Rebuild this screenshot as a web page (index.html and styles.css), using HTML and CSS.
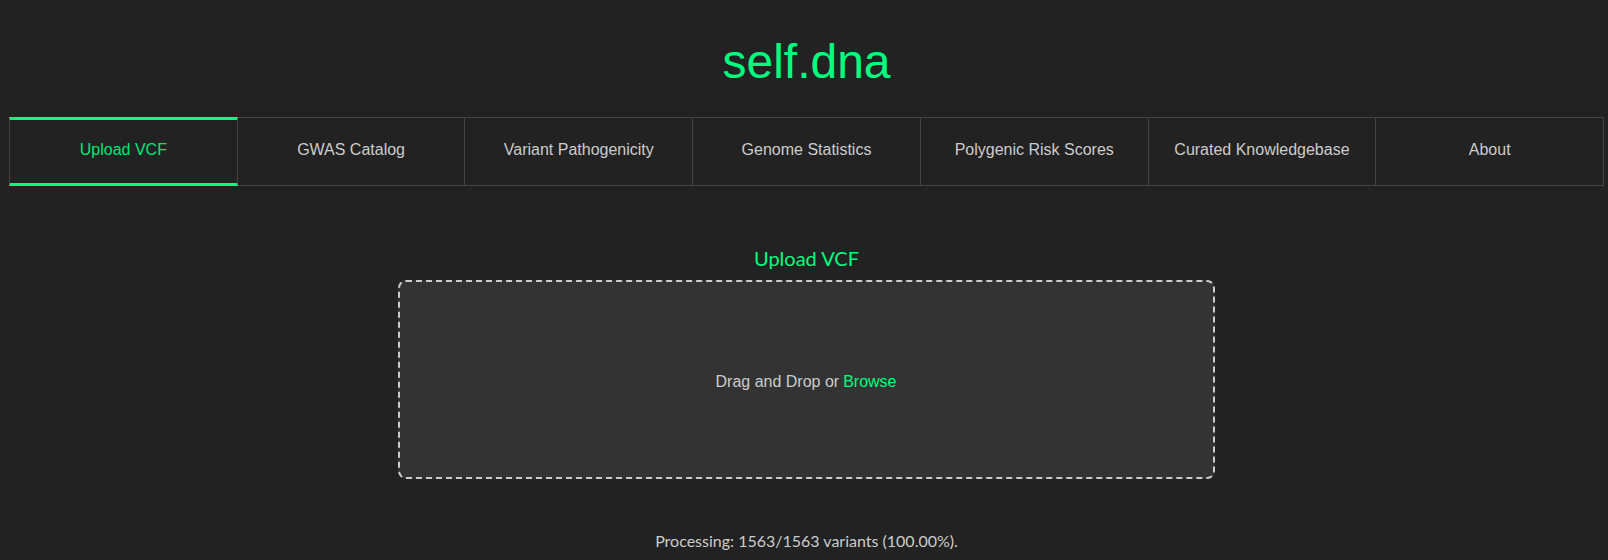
FILE: index.html
```html
<!DOCTYPE html>
<html>
<head>
<meta charset="utf-8">
<link rel="stylesheet" href="styles.css">
</head>
<body>
<div class="page">
  <h1 class="title">self.dna</h1>
  <nav class="tabs">
    <div class="tab active">Upload VCF</div>
    <div class="tab">GWAS Catalog</div>
    <div class="tab">Variant Pathogenicity</div>
    <div class="tab">Genome Statistics</div>
    <div class="tab">Polygenic Risk Scores</div>
    <div class="tab">Curated Knowledgebase</div>
    <div class="tab">About</div>
  </nav>
  <section class="upload">
    <h2 class="upload-title">Upload VCF</h2>
    <div class="dropzone">Drag and Drop or <span class="browse">Browse</span></div>
    <p class="status">Processing: 1563/1563 variants (100.00%).</p>
  </section>
</div>
</body>
</html>
```
FILE: styles.css
```css
html, body {
  margin: 0;
  padding: 0;
  background: #222222;
  color: #cccccc;
  font-family: Lato, "Liberation Sans", sans-serif;
}
.page {
  padding: 30px 4px 0 9px;
}
.title {
  margin: 0;
  font-family: "Liberation Sans", Arial, sans-serif;
  font-weight: normal;
  font-size: 48px;
  line-height: 64px;
  text-align: center;
  color: #00ff7f;
}
.tabs {
  margin-top: 23px;
  display: flex;
}
.tab {
  flex: 1;
  box-sizing: border-box;
  height: 69px;
  padding-bottom: 4px;
  display: flex;
  align-items: center;
  justify-content: center;
  border: 1px solid #444444;
  border-left: none;
  font-family: "Liberation Sans", Arial, sans-serif;
  font-size: 16px;
  color: #cccccc;
}
.tab:first-child {
  border-left: 1px solid #444444;
}
.tab.active {
  color: #00e676;
  border-top: 3px solid #00ff7f;
  border-bottom: 3px solid #00ff7f;
}
.upload {
  display: flex;
  flex-direction: column;
  align-items: center;
}
.upload-title {
  margin: 60px 0 10px;
  font-family: Lato, sans-serif;
  font-weight: normal;
  font-size: 20px;
  line-height: 24px;
  color: #00ff7f;
}
.dropzone {
  box-sizing: border-box;
  width: 817px;
  height: 199px;
  padding-top: 4px;
  margin-left: -1px;
  background: #333333;
  border: 2px dashed #cccccc;
  border-radius: 8px;
  display: flex;
  align-items: center;
  justify-content: center;
  font-family: "Liberation Sans", Arial, sans-serif;
  font-size: 16px;
  color: #cccccc;
}
.browse {
  color: #00ff7f;
  margin-left: 4px;
}
.status {
  margin: 52px 0 0;
  font-size: 16px;
  line-height: 20px;
  color: #cccccc;
}
```
